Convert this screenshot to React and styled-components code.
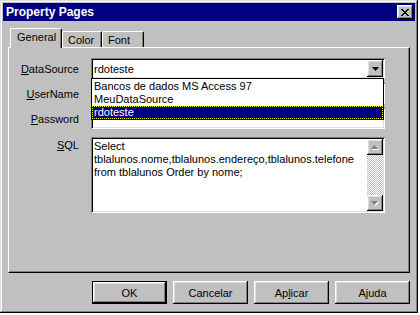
import React from "react";
import styled, { createGlobalStyle, css } from "styled-components";

const Global = createGlobalStyle`
  html, body { margin: 0; padding: 0; background: #ffffff; }
  body { font-family: "Liberation Sans", Arial, sans-serif; font-size: 11px; color: #000; }
`;

const raised = css`
  box-shadow: inset -1px -1px #000000, inset 1px 1px #ffffff,
    inset -2px -2px #808080, inset 2px 2px #dfdfdf;
`;

const sunken = css`
  box-shadow: inset 1px 1px #808080, inset -1px -1px #ffffff,
    inset 2px 2px #000000, inset -2px -2px #dfdfdf;
`;

const Window = styled.div`
  box-sizing: border-box;
  width: 418px;
  height: 313px;
  background: #c0c0c0;
  padding: 3px;
  display: flex;
  flex-direction: column;
  box-shadow: inset -1px -1px #000000, inset 1px 1px #dfdfdf,
    inset -2px -2px #808080, inset 2px 2px #ffffff;
`;

const TitleBar = styled.div`
  height: 18px;
  background: #000080;
  display: flex;
  align-items: center;
  justify-content: space-between;
  padding: 0 2px 0 3px;
`;

const Title = styled.span`
  color: #ffffff;
  font-weight: bold;
  font-size: 12px;
`;

const CloseButton = styled.div`
  box-sizing: border-box;
  width: 16px;
  height: 14px;
  background: #c0c0c0;
  ${raised};
  display: flex;
  align-items: center;
  justify-content: center;
`;

const Content = styled.div`
  padding: 7px 0 0 5px;
  display: flex;
  flex-direction: column;
`;

const TabStrip = styled.div`
  height: 19px;
  display: flex;
  align-items: flex-end;
  padding-left: 2px;
  position: relative;
  z-index: 1;
`;

const Tab = styled.div`
  box-sizing: border-box;
  width: ${(p) => p.$w}px;
  height: ${(p) => (p.$active ? 20 : 16)}px;
  margin-bottom: ${(p) => (p.$active ? -1 : 0)}px;
  background: #c0c0c0;
  border-top: 1px solid #ffffff;
  border-left: 1px solid #ffffff;
  border-right: 1px solid #000000;
  border-top-left-radius: 2px;
  border-top-right-radius: 2px;
  box-shadow: inset -1px 0 #808080;
  display: flex;
  align-items: ${(p) => (p.$active ? "flex-start" : "center")};
  padding-top: ${(p) => (p.$active ? 2 : 0)}px;
  padding-left: ${(p) => (p.$active ? 6 : 5)}px;
`;

const Panel = styled.div`
  box-sizing: border-box;
  width: 402px;
  height: 226px;
  background: #c0c0c0;
  border-top: 1px solid #ffffff;
  border-left: 1px solid #ffffff;
  border-right: 1px solid #000000;
  border-bottom: 1px solid #000000;
  box-shadow: inset -1px -1px #808080;
  padding: 10px 0 0 0;
  display: grid;
  grid-template-columns: 70px 294px;
  column-gap: 12px;
  grid-template-rows: 21px 21px 21px 76px;
  row-gap: 4px;
  align-content: start;
`;

const Label = styled.div`
  text-align: right;
  display: flex;
  align-items: ${(p) => (p.$top ? "flex-start" : "center")};
  justify-content: flex-end;
  padding-top: ${(p) => (p.$top ? 2 : 0)}px;
  margin-top: ${(p) => p.$mt || 0}px;
`;

const U = styled.span`
  text-decoration: underline;
  text-underline-offset: 1px;
`;

const Field = styled.div`
  box-sizing: border-box;
  position: relative;
  background: #ffffff;
  ${sunken};
  margin-top: ${(p) => p.$mt || 0}px;
  height: ${(p) => p.$h || 21}px;
`;

const ComboText = styled.div`
  position: absolute;
  left: 3px;
  top: 0;
  bottom: 0;
  display: flex;
  align-items: center;
`;

const ArrowButton = styled.div`
  box-sizing: border-box;
  position: absolute;
  right: 2px;
  top: 2px;
  width: 16px;
  height: 17px;
  background: #c0c0c0;
  ${raised};
  display: flex;
  align-items: center;
  justify-content: center;
`;

const DropList = styled.div`
  box-sizing: border-box;
  position: absolute;
  left: 0;
  top: 20px;
  width: 293px;
  height: 42px;
  background: #ffffff;
  border: 1px solid #000000;
  padding-top: 1px;
  z-index: 5;
`;

const Item = styled.div`
  box-sizing: border-box;
  height: 13px;
  line-height: 12px;
  padding-left: 2px;
  white-space: nowrap;
  ${(p) =>
    p.$selected &&
    css`
      background: #000080;
      color: #ffffff;
      outline: 1px dotted #ffff00;
      outline-offset: -1px;
    `}
`;

const SqlText = styled.div`
  position: absolute;
  left: 3px;
  top: 3px;
  right: 20px;
  line-height: 13px;
  white-space: pre;
`;

const ScrollBar = styled.div`
  position: absolute;
  right: 2px;
  top: 2px;
  bottom: 2px;
  width: 16px;
  display: flex;
  flex-direction: column;
  background-color: #ffffff;
  background-image: repeating-conic-gradient(#c0c0c0 0 25%, #ffffff 0 50%);
  background-size: 2px 2px;
`;

const ScrollButton = styled.div`
  box-sizing: border-box;
  width: 16px;
  height: 16px;
  background: #c0c0c0;
  ${raised};
  display: flex;
  align-items: center;
  justify-content: center;
  margin-top: ${(p) => (p.$bottom ? "auto" : 0)};
`;

const ButtonRow = styled.div`
  display: flex;
  justify-content: flex-end;
  gap: 6px;
  width: 402px;
  margin-top: 8px;
`;

const Button = styled.div`
  box-sizing: border-box;
  width: 75px;
  height: 23px;
  background: #c0c0c0;
  display: flex;
  align-items: center;
  justify-content: center;
  ${(p) =>
    p.$default
      ? css`
          border: 1px solid #000000;
          box-shadow: inset -1px -1px #000000, inset 1px 1px #ffffff,
            inset -2px -2px #808080, inset 2px 2px #dfdfdf;
        `
      : raised};
`;

const Tri = ({ up, color = "#000" }) => (
  <svg width="7" height="4" viewBox="0 0 7 4">
    {up ? (
      <polygon points="3.5,0 7,4 0,4" fill={color} />
    ) : (
      <polygon points="0,0 7,0 3.5,4" fill={color} />
    )}
  </svg>
);

const GrayTri = ({ up }) => (
  <svg width="8" height="5" viewBox="0 0 8 5">
    {up ? (
      <>
        <polygon points="4,1 8,5 1,5" fill="#ffffff" />
        <polygon points="3.5,0 7,4 0,4" fill="#808080" />
      </>
    ) : (
      <>
        <polygon points="1,1 8,1 4.5,5" fill="#ffffff" />
        <polygon points="0,0 7,0 3.5,4" fill="#808080" />
      </>
    )}
  </svg>
);

const CloseX = () => (
  <svg width="8" height="7" viewBox="0 0 8 7">
    <path
      d="M0 0h2v1h1v1h2V1h1V0h2v1H7v1H6v1H5v1h1v1h1v1h1v1H6V6H5V5H3v1H2v1H0V6h1V5h1V4h1V3H2V2H1V1H0z"
      fill="#000"
    />
  </svg>
);

export default function App() {
  return (
    <>
      <Global />
      <Window>
        <TitleBar>
          <Title>Property Pages</Title>
          <CloseButton>
            <CloseX />
          </CloseButton>
        </TitleBar>
        <Content>
          <TabStrip>
            <Tab $active $w={52}>General</Tab>
            <Tab $w={40}>Color</Tab>
            <Tab $w={42}>Font</Tab>
          </TabStrip>
          <Panel>
            <Label>
              <span>
                <U>D</U>ataSource
              </span>
            </Label>
            <Field>
              <ComboText>rdoteste</ComboText>
              <ArrowButton>
                <Tri />
              </ArrowButton>
              <DropList>
                <Item>Bancos de dados MS Access 97</Item>
                <Item>MeuDataSource</Item>
                <Item $selected>rdoteste</Item>
              </DropList>
            </Field>
            <Label>
              <span>
                <U>U</U>serName
              </span>
            </Label>
            <Field />
            <Label>
              <span>
                <U>P</U>assword
              </span>
            </Label>
            <Field />
            <Label $top $mt={4}>
              <span>
                <U>S</U>QL
              </span>
            </Label>
            <Field $mt={4} $h={76}>
              <SqlText>
                {"Select\ntblalunos.nome,tblalunos.endereço,tblalunos.telefone\nfrom tblalunos Order by nome;"}
              </SqlText>
              <ScrollBar>
                <ScrollButton>
                  <GrayTri up />
                </ScrollButton>
                <ScrollButton $bottom>
                  <GrayTri />
                </ScrollButton>
              </ScrollBar>
            </Field>
          </Panel>
          <ButtonRow>
            <Button $default>OK</Button>
            <Button>Cancelar</Button>
            <Button>
              <span>
                Ap<U>l</U>icar
              </span>
            </Button>
            <Button>Ajuda</Button>
          </ButtonRow>
        </Content>
      </Window>
    </>
  );
}
